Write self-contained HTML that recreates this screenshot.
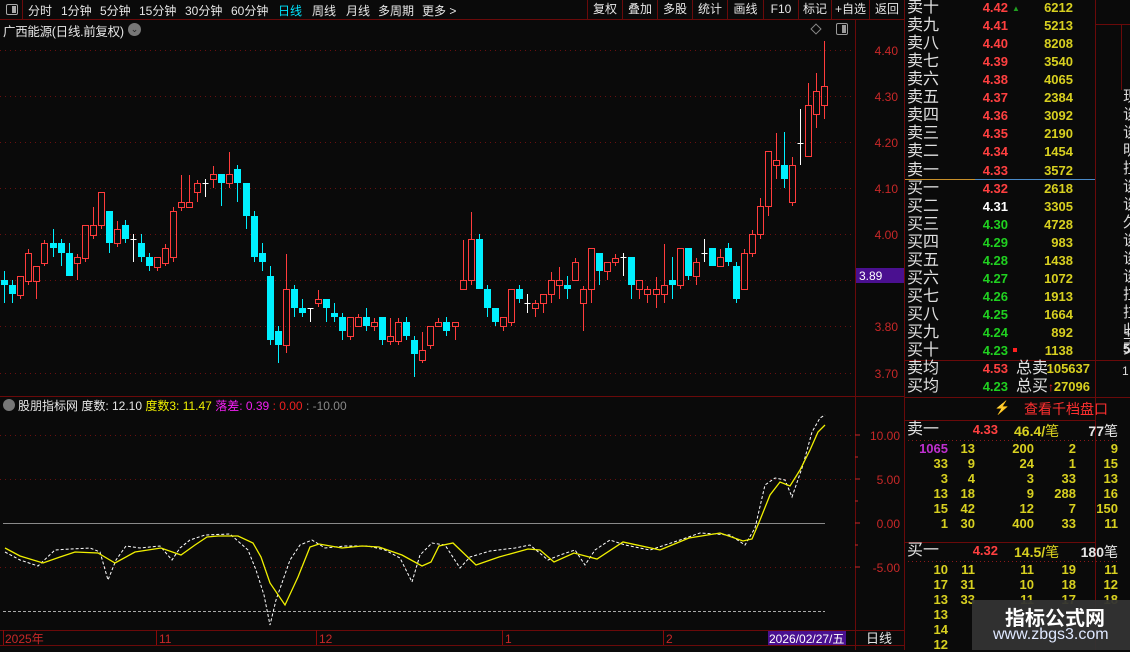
<!DOCTYPE html>
<html><head><meta charset="utf-8">
<style>
*{margin:0;padding:0;box-sizing:border-box}
body{width:1130px;height:650px;background:#0a0a0a;overflow:hidden;position:relative;font-family:"Liberation Sans","Noto Sans CJK SC",sans-serif;color:#ddd}
.a{position:absolute;white-space:nowrap}
.tb{font-size:12px;color:#e6e6e6;top:2px}
.btn{position:absolute;top:0;height:20px;border-left:1px solid #6a0a0a;font-size:12px;color:#e6e6e6;text-align:center;line-height:19px}
.ob{position:absolute;left:907px;font-size:16px;color:#e0e0e0;height:18px;line-height:18px}
.pr{position:absolute;width:60px;text-align:right;font-weight:bold;font-size:13px}
.qt{position:absolute;width:70px;text-align:right;font-weight:bold;font-size:13px;color:#d8d020}
.g{position:absolute;font-size:13px;font-weight:bold;color:#d8d020;text-align:right;width:40px;height:15px;line-height:15px}
</style></head><body>
<div class="a" style="left:0;top:0;width:905px;height:20px;border-bottom:1px solid #6a0a0a"></div>
<div class="a" style="left:0;top:0;width:23px;height:20px;border-right:1px solid #6a0a0a"></div>
<div class="a" style="left:6px;top:4px;width:12px;height:11px;border:1px solid #aaa;border-radius:2px"><div style="position:absolute;right:1px;top:1px;width:4px;height:7px;background:#aaa"></div></div>
<div class="a tb" style="left:28px">分时</div>
<div class="a tb" style="left:61px">1分钟</div>
<div class="a tb" style="left:100px">5分钟</div>
<div class="a tb" style="left:139px">15分钟</div>
<div class="a tb" style="left:185px">30分钟</div>
<div class="a tb" style="left:231px">60分钟</div>
<div class="a tb" style="left:278px;color:#00e5ff">日线</div>
<div class="a tb" style="left:312px">周线</div>
<div class="a tb" style="left:346px">月线</div>
<div class="a tb" style="left:378px">多周期</div>
<div class="a tb" style="left:422px">更多 &gt;</div>
<div class="btn" style="left:587px;width:35px">复权</div>
<div class="btn" style="left:622px;width:35px">叠加</div>
<div class="btn" style="left:657px;width:35px">多股</div>
<div class="btn" style="left:692px;width:35px">统计</div>
<div class="btn" style="left:727px;width:36px">画线</div>
<div class="btn" style="left:763px;width:35px">F10</div>
<div class="btn" style="left:798px;width:33px">标记</div>
<div class="btn" style="left:831px;width:38px">+自选</div>
<div class="btn" style="left:869px;width:36px;border-right:1px solid #6a0a0a">返回</div>
<div class="a" style="left:3px;top:21px;font-size:12.5px;color:#e6e6e6;letter-spacing:-0.3px">广西能源(日线.前复权)</div>
<div class="a" style="left:128px;top:23px;width:13px;height:13px;border-radius:50%;background:#777;color:#222;font-size:9px;text-align:center;line-height:13px">⌄</div>
<div class="a" style="left:812px;top:25px;width:8px;height:8px;border:1px solid #888;transform:rotate(45deg)"></div>
<div class="a" style="left:836px;top:23px;width:12px;height:12px;border:1px solid #999;border-radius:2px"><div style="position:absolute;right:1px;top:1px;width:4px;height:8px;background:#999"></div></div>

<svg class="a" style="left:0;top:0" width="1130" height="650" id="sv">
<g stroke="#6a0a0a" stroke-width="1" fill="none">
<line x1="855.5" y1="20" x2="855.5" y2="650"/>
<line x1="904.5" y1="0" x2="904.5" y2="650"/>
<line x1="0" y1="396.5" x2="905" y2="396.5"/>
<line x1="0" y1="630.5" x2="905" y2="630.5"/>
<line x1="0" y1="645.5" x2="905" y2="645.5"/>
</g>
<g stroke="#6a1010" stroke-dasharray="1,4" id="grid"></g>
<g font-size="12" fill="#c82828" font-family="Liberation Sans" text-anchor="end">
<text x="898" y="55">4.40</text><text x="898" y="101">4.30</text><text x="898" y="147">4.20</text><text x="898" y="193">4.10</text><text x="898" y="239">4.00</text><text x="898" y="331">3.80</text><text x="898" y="378">3.70</text>
<text x="900" y="440">10.00</text><text x="900" y="484">5.00</text><text x="900" y="528">0.00</text><text x="900" y="572">-5.00</text>
</g>
<g stroke="#c82828"><line x1="855" y1="435" x2="860" y2="435"/><line x1="855" y1="479" x2="860" y2="479"/><line x1="855" y1="523" x2="860" y2="523"/><line x1="855" y1="567" x2="860" y2="567"/><line x1="855" y1="457" x2="858" y2="457"/><line x1="855" y1="501" x2="858" y2="501"/><line x1="855" y1="545" x2="858" y2="545"/></g>
<rect x="856" y="268" width="48" height="15" fill="#4a1090"/>
<text x="859" y="280" font-size="12" fill="#fff" font-family="Liberation Sans">3.89</text>
<g id="cd"></g>
<line x1="3" y1="523.5" x2="825" y2="523.5" stroke="#8a8a8a"/>
<line x1="3" y1="611.5" x2="825" y2="611.5" stroke="#aaa" stroke-dasharray="3,2"/>
<polyline id="wl" fill="none" stroke="#fff" stroke-dasharray="3,2" stroke-width="1"/>
<polyline id="yl" fill="none" stroke="#f0f000" stroke-width="1.3"/>
<g stroke="#8a0a0a"><line x1="3.5" y1="630" x2="3.5" y2="645"/><line x1="156.5" y1="630" x2="156.5" y2="645"/><line x1="316.5" y1="630" x2="316.5" y2="645"/><line x1="502.5" y1="630" x2="502.5" y2="645"/><line x1="663.5" y1="630" x2="663.5" y2="645"/></g>
<g font-size="12" fill="#c82828" font-family="Liberation Sans,Noto Sans CJK SC"><text x="5" y="643">2025年</text><text x="159" y="643">11</text><text x="319" y="643">12</text><text x="505" y="643">1</text><text x="666" y="643">2</text></g>
<rect x="768" y="631" width="78" height="14" fill="#4a1090"/>
<text x="769" y="643" font-size="12" fill="#fff" font-family="Liberation Sans,Noto Sans CJK SC">2026/02/27/五</text>
<text x="866" y="643" font-size="13" fill="#e6e6e6" font-family="Liberation Sans,Noto Sans CJK SC">日线</text>
<g stroke="#6a0a0a"><line x1="1095.5" y1="0" x2="1095.5" y2="650"/><line x1="905" y1="360.5" x2="1095" y2="360.5"/><line x1="905" y1="397.5" x2="1130" y2="397.5"/><line x1="905" y1="420.5" x2="1095" y2="420.5"/><line x1="905" y1="542.5" x2="1095" y2="542.5"/><line x1="1095" y1="24.5" x2="1130" y2="24.5"/><line x1="1095" y1="360.5" x2="1130" y2="360.5"/><line x1="1121.5" y1="24" x2="1121.5" y2="90"/></g>
<line x1="905" y1="179.5" x2="975" y2="179.5" stroke="#c8902a"/><line x1="975" y1="179.5" x2="1095" y2="179.5" stroke="#4a8ac8"/>
<g stroke="#8a1a1a" stroke-dasharray="1,3"><line x1="908" y1="440.5" x2="1120" y2="440.5"/><line x1="908" y1="561.5" x2="1120" y2="561.5"/></g>
</svg>

<div class="a" style="left:3px;top:399px;width:12px;height:12px;border-radius:50%;background:#777"></div>
<div class="a" style="left:18px;top:397px;font-size:12px;color:#e6e6e6">股朋指标网 度数: 12.10 <span style="color:#f0f000">度数3: 11.47</span> <span style="color:#f020f0">落差: 0.39</span> <span style="color:#f02020">: 0.00</span> <span style="color:#888">: -10.00</span></div>

<div id="ob"></div>
<div class="ob" style="top:360px">卖均</div><div class="pr" style="left:948px;top:361px;color:#ff4040">4.53</div><div class="ob" style="left:1016px;top:360px">总卖<span style="color:#ff2020;font-size:12px">↑</span></div><div class="qt" style="left:1018px;top:361px;width:72px">105637</div>
<div class="ob" style="top:378px">买均</div><div class="pr" style="left:948px;top:379px;color:#20d020">4.23</div><div class="ob" style="left:1016px;top:378px">总买<span style="color:#ff2020;font-size:12px">↑</span></div><div class="qt" style="left:1018px;top:379px;width:72px">27096</div>
<div class="a" style="left:994px;top:400px;color:#8a7020;font-size:13px">⚡</div>
<div class="a" style="left:1024px;top:399px;color:#ff3030;font-size:14px">查看千档盘口</div>
<div class="ob" style="top:421px">卖一</div><div class="pr" style="left:938px;top:422px;color:#ff4040">4.33</div><div class="a" style="left:1014px;top:421px;font-size:14px;color:#d8d020;font-weight:bold">46.4/<span style="font-weight:normal">笔</span></div><div class="a" style="left:1058px;top:421px;font-size:14px;color:#e6e6e6;width:60px;text-align:right;font-weight:bold">77<span style="font-weight:normal">笔</span></div>
<div class="ob" style="top:542px">买一</div><div class="pr" style="left:938px;top:543px;color:#ff4040">4.32</div><div class="a" style="left:1014px;top:542px;font-size:14px;color:#d8d020;font-weight:bold">14.5/<span style="font-weight:normal">笔</span></div><div class="a" style="left:1058px;top:542px;font-size:14px;color:#e6e6e6;width:60px;text-align:right;font-weight:bold">180<span style="font-weight:normal">笔</span></div>
<div id="gr"></div>
<div class="a" style="left:1123px;top:88px;width:7px;font-size:15px;color:#ddd;line-height:18px;overflow:hidden;height:270px">现<br>谈<br>谈<br>明<br>拉<br>谈<br>谈<br>久<br>谈<br>谈<br>谈<br>拉<br>拉<br>收<br>交</div>
<div class="a" style="left:1123px;top:324px;font-size:13px;color:#ddd">三</div>
<div class="a" style="left:1123px;top:341px;font-size:13px;color:#ddd;font-weight:bold">5</div>
<div class="a" style="left:1122px;top:364px;font-size:12px;color:#ddd">1</div>
<div class="a" style="left:972px;top:600px;width:158px;height:50px;background:#333;opacity:.95"></div>
<div class="a" style="left:1005px;top:602px;font-size:20px;font-weight:bold;color:#fff">指标公式网</div>
<div class="a" style="left:993px;top:626px;font-size:16px;color:#dfe8ff">www.zbgs3.com</div>

<script>
var ns="http://www.w3.org/2000/svg";
function el(t,a,p){var e=document.createElementNS(ns,t);for(var k in a)e.setAttribute(k,a[k]);p.appendChild(e);return e;}
var g=document.getElementById('grid');
[50,96,142,188,234,280,326,373].forEach(function(y){el('line',{x1:0,y1:y+.5,x2:855,y2:y+.5},g);});
[435,479,567].forEach(function(y){el('line',{x1:0,y1:y+.5,x2:855,y2:y+.5},g);});
var C=[
['c',280,285,271,303],['c',285,294,280,303],['r',276,295,276,299],['r',253,281,249,285],['r',266,281,266,299],['r',243,263,240,266],['c',243,248,229,257],['c',243,253,239,266],['c',253,276,243,276],['r',257,263,254,280],
['r',225,258,225,262],['r',225,235,207,239],['r',192,225,192,229],['c',211,243,211,253],['r',229,243,221,247],['c',225,239,220,243],['w',239,239,234,262],['c',243,257,234,262],['c',257,266,253,271],['r',257,267,257,271],
['r',248,263,244,266],['r',211,257,207,262],['r',202,207,175,211],['r',202,207,175,207],['r',183,192,180,202],['w',183,183,179,197],['r',174,179,166,188],['c',174,183,174,206],['r',174,183,152,188],['c',169,183,165,202],
['c',183,216,183,229],['c',216,257,211,262],['c',253,262,243,271],['c',276,340,266,345],['c',331,345,326,363],['r',289,345,254,353],['c',289,308,285,317],['c',308,313,299,317],['w',308,308,308,322],['r',299,303,290,307],
['c',299,308,299,322],['c',313,317,303,322],['c',317,331,313,340],['r',317,336,317,340],['r',317,326,314,326],['c',317,326,308,331],['r',322,326,318,331],['c',317,340,317,345],['r',336,341,318,345],['r',322,341,318,345],
['c',322,336,317,340],['c',340,354,336,377],['r',350,360,332,363],['r',326,345,326,349],['r',322,326,318,326],['c',322,331,317,336],['r',322,326,322,340],['r',280,289,240,289],['r',239,280,212,285],['c',239,289,234,289],
['c',289,308,285,317],['c',308,322,308,326],['r',317,326,317,331],['r',289,322,289,326],['c',289,299,285,303],['w',303,303,294,313],['r',303,308,300,317],['r',294,303,294,313],['r',280,294,272,303],['r',280,285,267,299],
['c',285,289,276,299],['r',262,280,258,280],['r',289,303,286,331],['r',248,289,248,303],['c',253,271,253,285],['r',262,271,262,280],['r',258,262,254,266],['w',257,257,253,276],['c',257,285,257,299],['r',280,289,280,299],
['r',289,294,286,303],['r',289,294,277,308],['r',285,294,244,303],['c',280,285,257,299],['r',248,285,248,289],['c',248,276,248,280],['r',262,276,258,285],['w',253,253,239,262],['c',248,266,248,266],['r',257,266,249,266],
['c',248,262,243,266],['c',266,299,262,303],['r',253,289,249,289],['r',234,253,230,257],['r',206,234,198,239],['r',151,206,151,216],['r',160,165,133,179],['c',165,179,132,188],['r',165,202,157,206],['w',143,143,109,165],
['r',105,156,83,156],['r',91,114,73,128],['r',86,105,41,119]];
var cd=document.getElementById('cd');
C.forEach(function(c,i){var x=Math.round(4.3+i*8.04)+.5;var col=c[0]=='r'?'#ff3c3c':c[0]=='c'?'#00f0ff':'#ffffff';
el('line',{x1:x,y1:c[3],x2:x,y2:c[1],stroke:col},cd);el('line',{x1:x,y1:c[2],x2:x,y2:c[4],stroke:col},cd);
if(c[0]=='w'){el('line',{x1:x-3,y1:c[1]+.5,x2:x+3,y2:c[1]+.5,stroke:col},cd);}
else if(c[0]=='r'){el('rect',{x:x-3,y:c[1]+.5,width:6,height:Math.max(c[2]-c[1],2),fill:'none',stroke:col},cd);}
else{el('rect',{x:x-3.5,y:c[1],width:7,height:Math.max(c[2]-c[1],2),fill:col},cd);}});
var Y=[[5,548],[20,556],[43,563],[60,557],[75,552],[98,553],[115,563],[135,552],[161,548],[181,555],[195,545],[207,537],[218,536],[238,536],[253,543],[261,557],[270,583],[285,605],[298,577],[310,547],[319,544],[342,548],[362,546],[379,547],[402,555],[422,566],[431,562],[439,546],[453,543],[476,565],[499,557],[528,549],[540,550],[554,562],[574,553],[597,559],[623,542],[660,550],[689,538],[720,533],[743,541],[752,539],[760,520],[770,495],[780,482],[790,486],[800,470],[810,450],[818,432],[825,425]];
document.getElementById('yl').setAttribute('points',Y.map(function(p){return p.join(',')}).join(' '));
var W=[[5,552],[20,560],[38,566],[55,550],[70,549],[90,548],[100,552],[108,580],[116,560],[126,546],[140,548],[160,546],[172,560],[180,548],[190,540],[205,535],[230,534],[248,550],[256,570],[264,595],[270,625],[276,600],[290,560],[300,545],[312,540],[325,548],[345,546],[368,546],[385,550],[400,558],[412,582],[420,555],[432,543],[445,545],[460,568],[470,557],[490,551],[515,548],[530,545],[548,560],[560,555],[575,550],[585,565],[595,550],[610,540],[625,545],[650,550],[680,540],[700,533],[730,535],[745,545],[755,528],[765,485],[775,478],[785,480],[792,497],[803,465],[812,432],[820,418],[825,415]];
document.getElementById('wl').setAttribute('points',W.map(function(p){return p.join(',')}).join(' '));
var ob=document.getElementById('ob'),h='';
var S=[['卖十','4.42','6212'],['卖九','4.41','5213'],['卖八','4.40','8208'],['卖七','4.39','3540'],['卖六','4.38','4065'],['卖五','4.37','2384'],['卖四','4.36','3092'],['卖三','4.35','2190'],['卖二','4.34','1454'],['卖一','4.33','3572'],
['买一','4.32','2618','#ff4040'],['买二','4.31','3305','#fff'],['买三','4.30','4728','#20d020'],['买四','4.29','983','#20d020'],['买五','4.28','1438','#20d020'],['买六','4.27','1072','#20d020'],['买七','4.26','1913','#20d020'],['买八','4.25','1664','#20d020'],['买九','4.24','892','#20d020'],['买十','4.23','1138','#20d020']];
S.forEach(function(s,i){var t=i*18.06-1;h+='<div class="ob" style="top:'+t+'px">'+s[0]+'</div><div class="pr" style="left:948px;top:'+(t+1)+'px;color:'+(s[3]||'#ff4040')+'">'+s[1]+'</div><div class="qt" style="left:1003px;top:'+(t+1)+'px">'+s[2]+'</div>';});
h+='<div class="a" style="left:1012px;top:4px;color:#20a020;font-size:8px">▲</div><div class="a" style="left:1013px;top:348px;width:4px;height:4px;background:#ff2020"></div>';
ob.innerHTML=h;
var G1=[['1065','13','200','2','9'],['33','9','24','1','15'],['3','4','3','33','13'],['13','18','9','288','16'],['15','42','12','7','150'],['1','30','400','33','11']];
var G2=[['10','11','11','19','11'],['17','31','10','18','12'],['13','33','11','17','18'],['13','','','',''],['14','','','',''],['12','','','','']];
var xs=[908,935,994,1036,1078],gh='';
function rows(G,y0){G.forEach(function(r,i){r.forEach(function(v,j){if(!v)return;gh+='<div class="g" style="left:'+xs[j]+'px;top:'+(y0+i*15)+'px;'+(i==0&&j==0&&G===G1?'color:#c030d0':'')+'">'+v+'</div>';});});}
rows(G1,441);rows(G2,562);
document.getElementById('gr').innerHTML=gh;
</script>
</body></html>
